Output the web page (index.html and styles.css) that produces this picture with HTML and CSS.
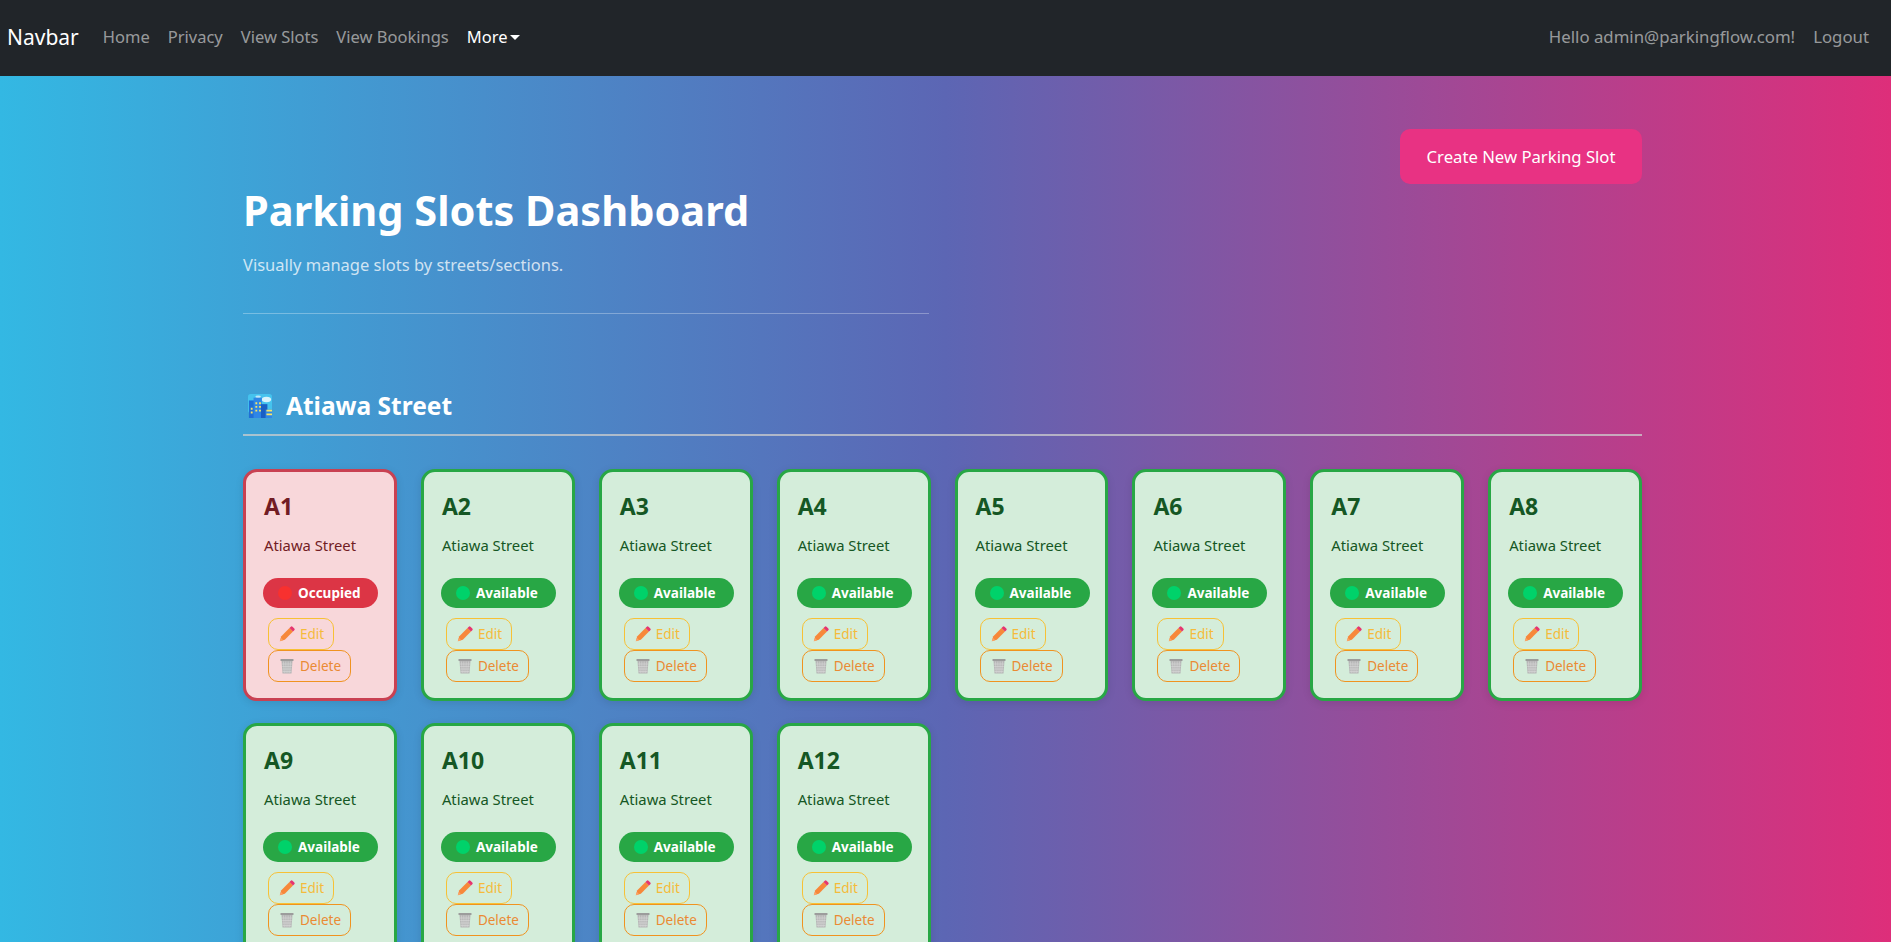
FILE: index.html
```html
<!DOCTYPE html>
<html lang="en">
<head>
<meta charset="utf-8">
<title>Parking Slots Dashboard</title>
<link rel="stylesheet" href="styles.css">
</head>
<body>
<svg class="defs" width="0" height="0" aria-hidden="true">
  <symbol id="i-city" viewBox="0 0 26 26">
    <rect x="0" y="0" width="26" height="21" rx="3" fill="#45c3ee"/>
    <ellipse cx="20" cy="6" rx="5" ry="3" fill="#d8f2fb"/>
    <ellipse cx="11" cy="3" rx="3" ry="1.5" fill="#bfe9f8"/>
    <rect x="1" y="7" width="6" height="19" fill="#1f6fd6"/>
    <rect x="6" y="4" width="9" height="22" fill="#2f86e6"/>
    <rect x="14" y="11" width="7" height="15" fill="#1a5fc4"/>
    <rect x="19" y="17" width="7" height="9" fill="#2f86e6"/>
    <path d="M8 9h2v2H8zM12 9h2v2h-2zM8 13h2v2H8zM12 13h2v2h-2zM8 17h2v2H8zM12 17h2v2h-2zM3 15h2v2H3zM3 19h2v2H3z" fill="#f3e26a"/>
    <path d="M20 17h6v2h-6zM20 21h6v2h-6z" fill="#f7e566"/>
  </symbol>
  <symbol id="i-pencil" viewBox="0 0 16 16">
    <path d="M.8 15.200l1.500-5L10.500 2l3.500 3.500-8.200 8.200z" fill="#f7883a"/>
    <path d="M.8 15.200l1-3.400 2.400 2.400z" fill="#f9a468"/>
    <path d="M10.500 2l1.300-1.300a1.200 1.200 0 0 1 1.700 0l1.800 1.800a1.200 1.200 0 0 1 0 1.700L14 5.500z" fill="#e6356f"/>
  </symbol>
  <symbol id="i-trash" viewBox="0 0 16 16">
    <rect x="1.500" y="1" width="13" height="2" rx=".5" fill="#9c9c9c"/>
    <path d="M2.500 3h11l-1 12.500h-9z" fill="#b6b6b6"/>
    <path d="M4.500 3.500l.8 11.500M6.800 3.500l.3 11.500M9.200 3.500l-.3 11.500M11.500 3.500l-.8 11.500M3 6h10M3.200 8.500h9.600M3.400 11h9.200M3.600 13.500h8.800" stroke="#d8d8d8" stroke-width=".6" fill="none"/>
  </symbol>
</svg>

<nav class="navbar">
  <a class="brand" href="#">Navbar</a>
  <ul class="nav-links">
    <li><a href="#">Home</a></li>
    <li><a href="#">Privacy</a></li>
    <li><a href="#">View Slots</a></li>
    <li><a href="#">View Bookings</a></li>
    <li><a class="active" href="#">More<span class="caret"></span></a></li>
  </ul>
  <ul class="nav-links nav-right">
    <li><a href="#">Hello admin@parkingflow.com!</a></li>
    <li><a href="#">Logout</a></li>
  </ul>
</nav>

<main class="page">
  <header class="hero">
    <div class="hero-text">
      <h1>Parking Slots Dashboard</h1>
      <p>Visually manage slots by streets/sections.</p>
      <hr>
    </div>
    <a class="create-btn" href="#">Create New Parking Slot</a>
  </header>

  <section class="street">
    <h2><svg class="city-icon"><use href="#i-city"/></svg>Atiawa Street</h2>
    <div class="slots">
      <article class="slot occupied">
        <h3>A1</h3><p>Atiawa Street</p>
        <span class="pill"><i class="dot"></i>Occupied</span>
        <div class="actions">
          <a class="act edit" href="#"><svg class="ico"><use href="#i-pencil"/></svg>Edit</a>
          <a class="act del" href="#"><svg class="ico"><use href="#i-trash"/></svg>Delete</a>
        </div>
      </article>
      <article class="slot">
        <h3>A2</h3><p>Atiawa Street</p>
        <span class="pill"><i class="dot"></i>Available</span>
        <div class="actions">
          <a class="act edit" href="#"><svg class="ico"><use href="#i-pencil"/></svg>Edit</a>
          <a class="act del" href="#"><svg class="ico"><use href="#i-trash"/></svg>Delete</a>
        </div>
      </article>
      <article class="slot">
        <h3>A3</h3><p>Atiawa Street</p>
        <span class="pill"><i class="dot"></i>Available</span>
        <div class="actions">
          <a class="act edit" href="#"><svg class="ico"><use href="#i-pencil"/></svg>Edit</a>
          <a class="act del" href="#"><svg class="ico"><use href="#i-trash"/></svg>Delete</a>
        </div>
      </article>
      <article class="slot">
        <h3>A4</h3><p>Atiawa Street</p>
        <span class="pill"><i class="dot"></i>Available</span>
        <div class="actions">
          <a class="act edit" href="#"><svg class="ico"><use href="#i-pencil"/></svg>Edit</a>
          <a class="act del" href="#"><svg class="ico"><use href="#i-trash"/></svg>Delete</a>
        </div>
      </article>
      <article class="slot">
        <h3>A5</h3><p>Atiawa Street</p>
        <span class="pill"><i class="dot"></i>Available</span>
        <div class="actions">
          <a class="act edit" href="#"><svg class="ico"><use href="#i-pencil"/></svg>Edit</a>
          <a class="act del" href="#"><svg class="ico"><use href="#i-trash"/></svg>Delete</a>
        </div>
      </article>
      <article class="slot">
        <h3>A6</h3><p>Atiawa Street</p>
        <span class="pill"><i class="dot"></i>Available</span>
        <div class="actions">
          <a class="act edit" href="#"><svg class="ico"><use href="#i-pencil"/></svg>Edit</a>
          <a class="act del" href="#"><svg class="ico"><use href="#i-trash"/></svg>Delete</a>
        </div>
      </article>
      <article class="slot">
        <h3>A7</h3><p>Atiawa Street</p>
        <span class="pill"><i class="dot"></i>Available</span>
        <div class="actions">
          <a class="act edit" href="#"><svg class="ico"><use href="#i-pencil"/></svg>Edit</a>
          <a class="act del" href="#"><svg class="ico"><use href="#i-trash"/></svg>Delete</a>
        </div>
      </article>
      <article class="slot">
        <h3>A8</h3><p>Atiawa Street</p>
        <span class="pill"><i class="dot"></i>Available</span>
        <div class="actions">
          <a class="act edit" href="#"><svg class="ico"><use href="#i-pencil"/></svg>Edit</a>
          <a class="act del" href="#"><svg class="ico"><use href="#i-trash"/></svg>Delete</a>
        </div>
      </article>
      <article class="slot">
        <h3>A9</h3><p>Atiawa Street</p>
        <span class="pill"><i class="dot"></i>Available</span>
        <div class="actions">
          <a class="act edit" href="#"><svg class="ico"><use href="#i-pencil"/></svg>Edit</a>
          <a class="act del" href="#"><svg class="ico"><use href="#i-trash"/></svg>Delete</a>
        </div>
      </article>
      <article class="slot">
        <h3>A10</h3><p>Atiawa Street</p>
        <span class="pill"><i class="dot"></i>Available</span>
        <div class="actions">
          <a class="act edit" href="#"><svg class="ico"><use href="#i-pencil"/></svg>Edit</a>
          <a class="act del" href="#"><svg class="ico"><use href="#i-trash"/></svg>Delete</a>
        </div>
      </article>
      <article class="slot">
        <h3>A11</h3><p>Atiawa Street</p>
        <span class="pill"><i class="dot"></i>Available</span>
        <div class="actions">
          <a class="act edit" href="#"><svg class="ico"><use href="#i-pencil"/></svg>Edit</a>
          <a class="act del" href="#"><svg class="ico"><use href="#i-trash"/></svg>Delete</a>
        </div>
      </article>
      <article class="slot">
        <h3>A12</h3><p>Atiawa Street</p>
        <span class="pill"><i class="dot"></i>Available</span>
        <div class="actions">
          <a class="act edit" href="#"><svg class="ico"><use href="#i-pencil"/></svg>Edit</a>
          <a class="act del" href="#"><svg class="ico"><use href="#i-trash"/></svg>Delete</a>
        </div>
      </article>
    </div>
  </section>
</main>
</body>
</html>
```
FILE: styles.css
```css
* { box-sizing: border-box; }
html, body { margin: 0; height: 942px; overflow: hidden; }
body {
  font-family: "Noto Sans", "Open Sans", sans-serif;
  background: linear-gradient(90deg, #33b8e3 0%, #5c66b4 50%, #de2e7a 100%);
  color: #fff;
}
.defs { position: absolute; }
a { text-decoration: none; color: inherit; }

.navbar {
  height: 76px;
  background: #212529;
  display: flex;
  align-items: center;
  padding: 0 13px 3px 7px;
}
.brand { font-size: 21px; color: #fff; margin-right: 15px; }
.nav-links { display: flex; list-style: none; margin: 0; padding: 0; font-size: 16.500px; }
.nav-links a { display: block; padding: 8px 9px; color: rgba(255,255,255,.55); }
.nav-links a.active { color: #fff; }
.nav-right { margin-left: auto; font-size: 16.800px; }
.caret {
  display: inline-block;
  margin-left: 3px;
  vertical-align: 3px;
  border-top: 5px solid #fff;
  border-left: 5px solid transparent;
  border-right: 5px solid transparent;
}

.page { width: 1399px; margin-left: 243px; padding-top: 53px; }
.hero { display: flex; justify-content: space-between; align-items: flex-start; }
.hero-text { width: 686px; padding-top: 53px; }
.hero-text h1 { margin: 0; font-size: 41.500px; line-height: 56px; font-weight: 700; }
.hero-text p { margin: 14px 0 0; font-size: 16.500px; line-height: 26px; color: rgba(255,255,255,.75); }
.hero-text hr { margin: 35px 0 0; border: 0; border-top: 1px solid rgba(255,255,255,.3); }
.create-btn {
  display: block;
  width: 242px;
  height: 55px;
  line-height: 55px;
  text-align: center;
  background: #e83283;
  border-radius: 10px;
  font-size: 16.700px;
}

.street { margin-top: 74px; }
.street h2 {
  display: flex;
  align-items: center;
  margin: 0 0 33px;
  padding-bottom: 10px;
  font-size: 24.500px;
  line-height: 36px;
  font-weight: 700;
  border-bottom: 2px solid rgba(205,205,205,.75);
}
.city-icon { width: 24px; height: 24px; margin: 0 14px 0 5px; }

.slots { display: grid; grid-template-columns: repeat(8, minmax(0, 1fr)); gap: 22px 24px; }
.slot {
  height: 232px;
  padding: 19px 18px;
  background: #d4edda;
  border: 3px solid #28a745;
  border-radius: 14px;
  color: #155724;
  box-shadow: 0 2px 8px rgba(0,0,0,.1);
}
.slot.occupied { background: #f8d7da; border-color: #c94152; color: #721c24; }
.slot h3 { margin: 0; font-size: 23px; line-height: 30px; font-weight: 700; }
.slot p { margin: 14px 0 0; font-size: 14.800px; line-height: 20px; }
.pill {
  display: flex;
  align-items: center;
  width: 115px;
  height: 30px;
  margin: 23px 0 0 -1px;
  padding-left: 15px;
  border-radius: 15px;
  background: #28a745;
  color: #fff;
  font-size: 13.500px;
  font-weight: 700;
}
.occupied .pill { background: #dc3545; }
.dot { width: 14px; height: 14px; border-radius: 50%; background: #00d26a; margin-right: 6px; flex: none; }
.occupied .dot { background: #f8312f; }
.actions { display: flex; flex-direction: column; align-items: flex-start; margin: 10px 0 0 4px; }
.act {
  display: flex;
  align-items: center;
  height: 32px;
  padding: 0 9px 0 10px;
  border: 1px solid;
  border-radius: 10px;
  font-size: 13.500px;
}
.edit { color: #f5bb3a; border-color: #f7c136; }
.del { color: #ea8a33; border-color: #f09320; }
.ico { width: 16px; height: 16px; margin-right: 5px; }
```
